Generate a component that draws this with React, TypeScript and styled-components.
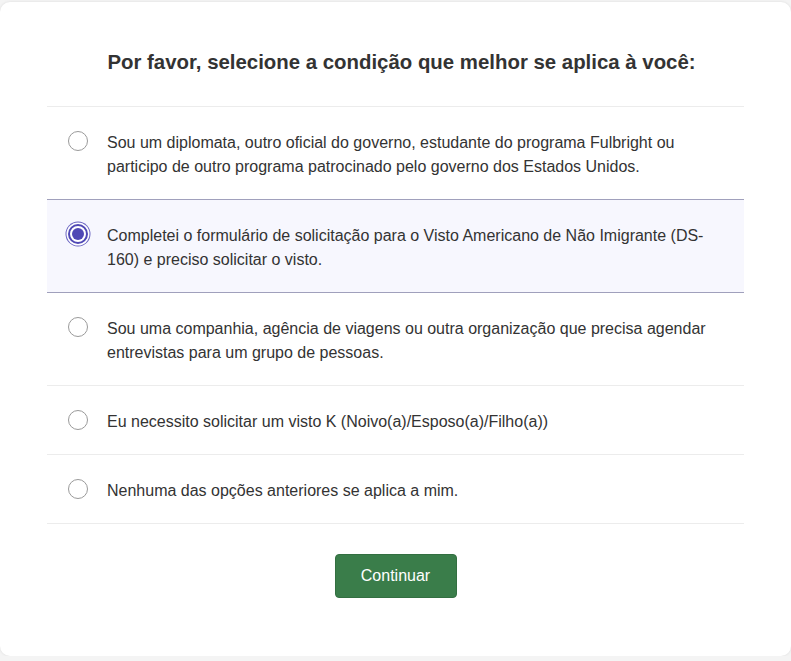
import { useState } from 'react';
import styled, { createGlobalStyle } from 'styled-components';

const GlobalStyle = createGlobalStyle`
  html, body {
    margin: 0;
    padding: 0;
    background: #f4f4f4;
  }

  body {
    font-family: "Liberation Sans", Arial, sans-serif;
    color: #333;
  }
`;

const Page = styled.main`
  padding-top: 2px;
  width: 791px;
`;

const Card = styled.section`
  box-sizing: border-box;
  height: 654px;
  background: #fff;
  border-radius: 10px;
  box-shadow: 0 0 3px rgba(0, 0, 0, 0.1);
  padding: 48px 47px 0;
`;

const Title = styled.h1`
  margin: 0 0 32px;
  padding-left: 12px;
  font-size: 20.4px;
  line-height: 24px;
  font-weight: bold;
  text-align: center;
  color: #333;
`;

const List = styled.div`
  border-top: 1px solid #ececec;
`;

const Option = styled.label<{ $checked: boolean }>`
  display: flex;
  align-items: flex-start;
  gap: 19px;
  padding: 22px 20px 22px 21px;
  border-bottom: 1px solid ${({ $checked }) => ($checked ? '#a0a0bc' : '#ececec')};
  background: ${({ $checked }) => ($checked ? '#f7f7fe' : '#fff')};
  cursor: pointer;
  margin-top: ${({ $checked }) => ($checked ? '-1px' : '0')};
  border-top: ${({ $checked }) => ($checked ? '1px solid #a0a0bc' : '0')};
`;

const Radio = styled.input`
  appearance: none;
  flex: none;
  box-sizing: border-box;
  width: 20px;
  height: 20px;
  margin: 2px 0 0;
  border: 1px solid #9a9a9a;
  border-radius: 50%;
  background: #fff;
  position: relative;

  &:checked {
    border: 2px solid #5048b5;
    box-shadow: 0 0 0 1.5px #fff, 0 0 0 2.5px #6a64c2;
  }

  &:checked::after {
    content: '';
    position: absolute;
    top: 2px;
    left: 2px;
    width: 12px;
    height: 12px;
    border-radius: 50%;
    background: #5048b5;
  }
`;

const OptionText = styled.span`
  margin: 2px 0 -2px;
  font-size: 16px;
  line-height: 24px;
  color: #333;
`;

const Actions = styled.div`
  display: flex;
  justify-content: center;
  padding-top: 30px;
`;

const Button = styled.button`
  width: 122px;
  height: 44px;
  border: 1px solid #336f41;
  border-radius: 4px;
  background: #3a7d4a;
  color: #fff;
  font-family: "Liberation Sans", Arial, sans-serif;
  font-size: 16px;
  cursor: pointer;
`;

const options = [
  'Sou um diplomata, outro oficial do governo, estudante do programa Fulbright ou participo de outro programa patrocinado pelo governo dos Estados Unidos.',
  'Completei o formulário de solicitação para o Visto Americano de Não Imigrante (DS-160) e preciso solicitar o visto.',
  'Sou uma companhia, agência de viagens ou outra organização que precisa agendar entrevistas para um grupo de pessoas.',
  'Eu necessito solicitar um visto K (Noivo(a)/Esposo(a)/Filho(a))',
  'Nenhuma das opções anteriores se aplica a mim.',
];

export default function App() {
  const [selected, setSelected] = useState(1);

  return (
    <>
      <GlobalStyle />
      <Page>
        <Card>
          <Title>Por favor, selecione a condição que melhor se aplica à você:</Title>
          <List>
            {options.map((text, i) => (
              <Option key={i} $checked={selected === i}>
                <Radio
                  type="radio"
                  name="condicao"
                  checked={selected === i}
                  onChange={() => setSelected(i)}
                />
                <OptionText>{text}</OptionText>
              </Option>
            ))}
          </List>
          <Actions>
            <Button type="button">Continuar</Button>
          </Actions>
        </Card>
      </Page>
    </>
  );
}
